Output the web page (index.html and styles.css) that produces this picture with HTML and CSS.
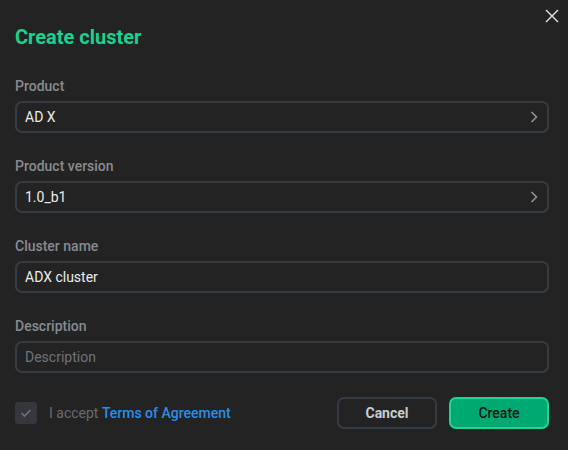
FILE: index.html
```html
<!DOCTYPE html>
<html>
<head>
<meta charset="utf-8">
<link rel="stylesheet" href="styles.css">
</head>
<body>
<div class="dialog">
  <button class="close" aria-label="Close">
    <svg width="16" height="16" viewBox="0 0 16 16"><path d="M2 2L14 14M14 2L2 14" stroke="#e6e6e6" stroke-width="1.4" fill="none"/></svg>
  </button>
  <h1 class="title">Create cluster</h1>
  <div class="fields">
    <div class="field">
      <div class="label">Product</div>
      <div class="input select"><span class="value">AD X</span>
        <svg class="chev" width="10" height="14" viewBox="0 0 10 14"><path d="M2.5 2L7.5 7L2.5 12" stroke="#8c9198" stroke-width="1.7" fill="none"/></svg>
      </div>
    </div>
    <div class="field">
      <div class="label">Product version</div>
      <div class="input select"><span class="value">1.0_b1</span>
        <svg class="chev" width="10" height="14" viewBox="0 0 10 14"><path d="M2.5 2L7.5 7L2.5 12" stroke="#8c9198" stroke-width="1.7" fill="none"/></svg>
      </div>
    </div>
    <div class="field">
      <div class="label">Cluster name</div>
      <div class="input"><span class="value">ADX cluster</span></div>
    </div>
    <div class="field">
      <div class="label">Description</div>
      <div class="input"><span class="placeholder">Description</span></div>
    </div>
  </div>
  <div class="footer">
    <div class="accept">
      <span class="checkbox">
        <svg width="12" height="10" viewBox="0 0 12 10"><path d="M1.5 5L4.5 8L10.5 2" stroke="#6d7178" stroke-width="1.6" fill="none"/></svg>
      </span>
      <span class="accept-text">I accept <a class="terms">Terms of Agreement</a></span>
    </div>
    <div class="buttons">
      <button class="btn cancel">Cancel</button>
      <button class="btn create">Create</button>
    </div>
  </div>
</div>
</body>
</html>
```
FILE: styles.css
```css
html, body {
  margin: 0;
  padding: 0;
  background: #232323;
  width: 568px;
  height: 450px;
  overflow: hidden;
}
.dialog {
  position: relative;
  box-sizing: border-box;
  width: 568px;
  height: 450px;
  padding: 25px 19px 0 15px;
  font-family: Roboto, "Liberation Sans", sans-serif;
  color: #e8e8e8;
}
.close {
  position: absolute;
  top: 8px;
  right: 8px;
  width: 16px;
  height: 16px;
  padding: 0;
  border: 0;
  background: none;
  display: flex;
}
.title {
  margin: 0;
  font-size: 20px;
  line-height: 24px;
  font-weight: 700;
  color: #1cd08e;
}
.fields {
  margin-top: 27px;
  display: flex;
  flex-direction: column;
  gap: 23px;
}
.field {
  display: flex;
  flex-direction: column;
  gap: 5px;
}
.label {
  font-size: 14px;
  line-height: 20px;
  font-weight: 500;
  color: #878b92;
}
.input {
  box-sizing: border-box;
  height: 32px;
  border: 2px solid #373c44;
  border-radius: 7px;
  padding: 0 8px 0 8px;
  display: flex;
  align-items: center;
  justify-content: space-between;
  font-size: 14px;
}
.value {
  color: #ececec;
}
.placeholder {
  color: #6f747b;
}
.chev {
  display: block;
}
.footer {
  margin-top: 24px;
  display: flex;
  align-items: center;
  justify-content: space-between;
}
.accept {
  display: flex;
  align-items: center;
  gap: 12px;
}
.checkbox {
  width: 22px;
  height: 22px;
  border-radius: 3px;
  background: #35373b;
  display: flex;
  align-items: center;
  justify-content: center;
}
.accept-text {
  font-size: 14px;
  color: #676b72;
}
.terms {
  color: #2b8ee8;
  font-weight: 500;
}
.buttons {
  display: flex;
  gap: 12px;
}
.btn {
  box-sizing: border-box;
  width: 100px;
  height: 32px;
  border-radius: 7px;
  font-family: Roboto, "Liberation Sans", sans-serif;
  font-size: 14px;
  font-weight: 500;
  padding: 0;
}
.cancel {
  background: transparent;
  border: 2px solid #373c44;
  color: #c9cdd2;
  font-weight: 700;
}
.create {
  background: #00a872;
  border: 2px solid #20d696;
  color: #0f1512;
}
```
